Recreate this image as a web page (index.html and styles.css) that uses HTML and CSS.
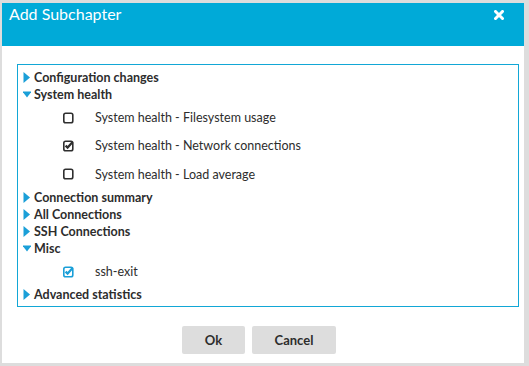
FILE: index.html
```html
<!DOCTYPE html>
<html>
<head>
<meta charset="utf-8">
<link rel="stylesheet" href="styles.css">
</head>
<body>
<div class="dialog">
  <div class="header">
    <span class="title">Add Subchapter</span>
    <svg class="close" width="10" height="10" viewBox="0 0 10 10"><path d="M1.5 1.5 L8.5 8.5 M8.5 1.5 L1.5 8.5" stroke="#fff" stroke-width="3" stroke-linecap="square"/></svg>
  </div>
  <div class="body">
    <div class="tree">
      <div class="node"><svg class="tri" width="8" height="11" viewBox="0 0 8 11"><polygon points="0.5,0 7,5.5 0.5,11" fill="#1a9fd8"/></svg>Configuration changes</div>
      <div class="node"><svg class="tri" width="8" height="11" viewBox="0 0 8 11"><polygon points="-0.5,2.5 8.5,2.5 4,8.5" fill="#1a9fd8"/></svg>System health</div>
      <div class="leaves">
        <div class="leaf"><svg class="cb" width="12" height="12" viewBox="0 0 12 12"><rect x="1.8" y="1.3" width="9" height="9.5" rx="1.8" fill="none" stroke="#2f2f2f" stroke-width="1.6"/></svg>System health - Filesystem usage</div>
        <div class="leaf"><svg class="cb" width="12" height="12" viewBox="0 0 12 12"><rect x="1.8" y="1.3" width="9" height="9.5" rx="1.8" fill="none" stroke="#2f2f2f" stroke-width="1.6"/><path d="M3.6 5.6 L5.6 7.6 L10.6 2" fill="none" stroke="#2f2f2f" stroke-width="2.2"/></svg>System health - Network connections</div>
        <div class="leaf"><svg class="cb" width="12" height="12" viewBox="0 0 12 12"><rect x="1.8" y="1.3" width="9" height="9.5" rx="1.8" fill="none" stroke="#2f2f2f" stroke-width="1.6"/></svg>System health - Load average</div>
      </div>
      <div class="node"><svg class="tri" width="8" height="11" viewBox="0 0 8 11"><polygon points="0.5,0 7,5.5 0.5,11" fill="#1a9fd8"/></svg>Connection summary</div>
      <div class="node"><svg class="tri" width="8" height="11" viewBox="0 0 8 11"><polygon points="0.5,0 7,5.5 0.5,11" fill="#1a9fd8"/></svg>All Connections</div>
      <div class="node"><svg class="tri" width="8" height="11" viewBox="0 0 8 11"><polygon points="0.5,0 7,5.5 0.5,11" fill="#1a9fd8"/></svg>SSH Connections</div>
      <div class="node"><svg class="tri" width="8" height="11" viewBox="0 0 8 11"><polygon points="-0.5,2.5 8.5,2.5 4,8.5" fill="#1a9fd8"/></svg>Misc</div>
      <div class="leaves">
        <div class="leaf"><svg class="cb" width="12" height="12" viewBox="0 0 12 12"><rect x="1.8" y="1.3" width="9" height="9.5" rx="1.8" fill="none" stroke="#1a9fd8" stroke-width="1.6"/><path d="M3.6 5.6 L5.6 7.6 L10.6 2" fill="none" stroke="#1a9fd8" stroke-width="2.2"/></svg>ssh-exit</div>
      </div>
      <div class="node"><svg class="tri" width="8" height="11" viewBox="0 0 8 11"><polygon points="0.5,0 7,5.5 0.5,11" fill="#1a9fd8"/></svg>Advanced statistics</div>
    </div>
    <div class="buttons">
      <button class="btn ok">Ok</button>
      <button class="btn cancel">Cancel</button>
    </div>
  </div>
</div>
</body>
</html>
```

FILE: styles.css
```css
html, body {
  margin: 0;
  padding: 0;
  background: #dddddd;
  width: 529px;
  height: 366px;
  overflow: hidden;
}
body {
  font-family: Lato, "Open Sans", sans-serif;
  color: #2d2d2d;
  padding: 3px 0 0 2px;
  box-sizing: border-box;
}
.dialog {
  width: 522px;
  height: 360px;
  background: #ffffff;
  display: flex;
  flex-direction: column;
}
.header {
  height: 43px;
  background: #00aad8;
  display: flex;
  align-items: flex-start;
  justify-content: space-between;
  padding: 1px 20px 0 7px;
  box-sizing: border-box;
}
.title {
  color: #ffffff;
  font-size: 16px;
  line-height: 20px;
}
.close {
  margin-top: 6px;
}
.body {
  padding: 18px 5px 0 15px;
  display: flex;
  flex-direction: column;
}
.tree {
  border: 1px solid #12a7d6;
  height: 243px;
  box-sizing: border-box;
  padding: 4px 0 0 5px;
}
.node {
  font-weight: bold;
  font-size: 12.5px;
  line-height: 17px;
  height: 17px;
  display: flex;
  align-items: center;
}
.tri {
  margin-right: 3px;
}
.leaves {
  padding-left: 39px;
  padding-top: 1px;
}
.leaf {
  font-size: 12.5px;
  line-height: 28.33px;
  height: 28.33px;
  display: flex;
  align-items: center;
}
.cb {
  margin-right: 21px;
  margin-top: -1px;
}
.buttons {
  display: flex;
  justify-content: center;
  gap: 7px;
  padding-top: 19px;
  padding-right: 18px;
}
.btn {
  font-family: Lato, "Open Sans", sans-serif;
  font-weight: bold;
  font-size: 13px;
  color: #2d2d2d;
  background: #dddddd;
  border: none;
  border-radius: 2px;
  height: 28px;
  padding: 0;
}
.ok {
  width: 63px;
}
.cancel {
  width: 84px;
}
```
